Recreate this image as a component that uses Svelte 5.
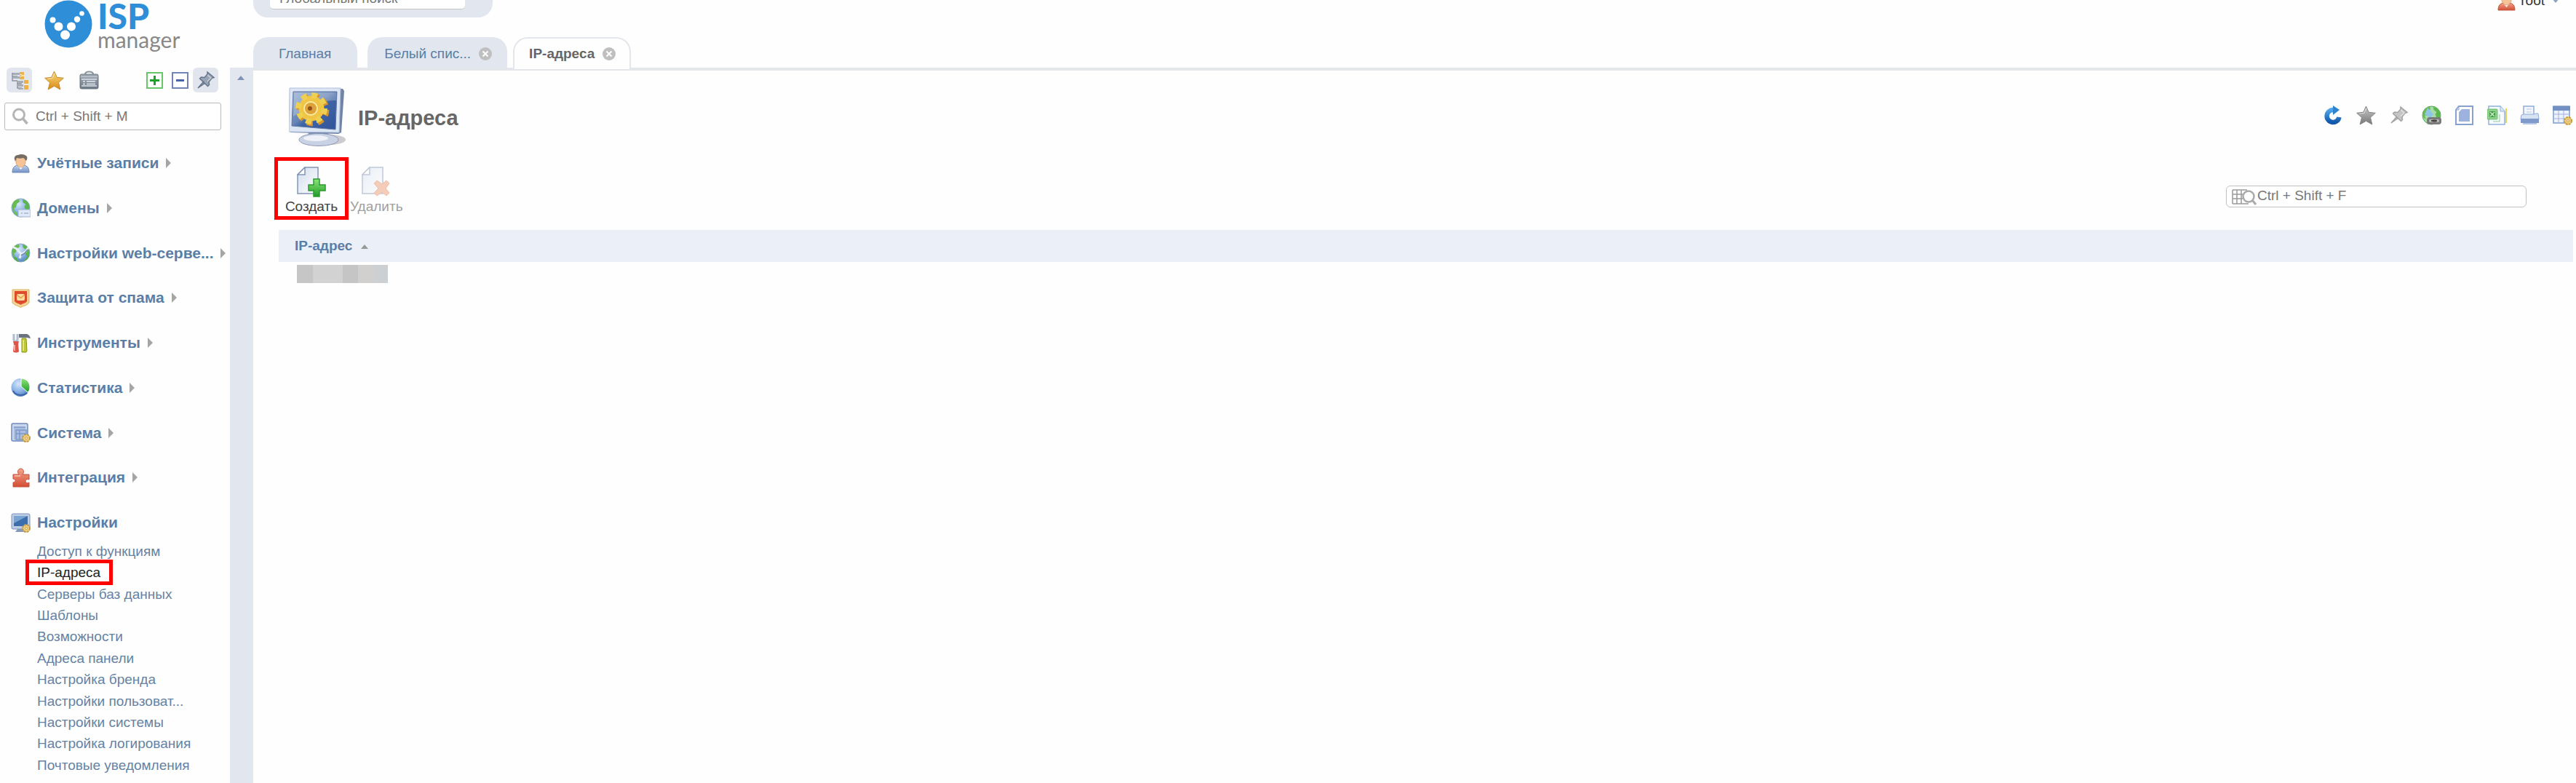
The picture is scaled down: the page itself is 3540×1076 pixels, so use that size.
<script>
    const menu = [
        { icon: 'user', title: 'Учётные записи' },
        { icon: 'domain', title: 'Домены' },
        { icon: 'web', title: 'Настройки web-серве...' },
        { icon: 'shield', title: 'Защита от спама' },
        { icon: 'tools', title: 'Инструменты' },
        { icon: 'stat', title: 'Статистика' },
        { icon: 'system', title: 'Система' },
        { icon: 'puzzle', title: 'Интеграция' },
        { icon: 'settings', title: 'Настройки', open: true }
    ];

    const submenu = [
        'Доступ к функциям',
        'IP-адреса',
        'Серверы баз данных',
        'Шаблоны',
        'Возможности',
        'Адреса панели',
        'Настройка бренда',
        'Настройки пользоват...',
        'Настройки системы',
        'Настройка логирования',
        'Почтовые уведомления'
    ];

    const actions = [
        { icon: 'refresh', title: 'Обновить' },
        { icon: 'starGray', title: 'В избранное' },
        { icon: 'pinGray', title: 'Закрепить' },
        { icon: 'link', title: 'Ссылка' },
        { icon: 'copy', title: 'Копировать' },
        { icon: 'excel', title: 'Экспорт' },
        { icon: 'print', title: 'Печать' },
        { icon: 'columns', title: 'Настройка колонок' }
    ];

    let activeItem = $state('IP-адреса');
</script>

<svg class="defs" aria-hidden="true">
    <defs>
        <linearGradient id="gold" x1="0" y1="0" x2="0" y2="1"><stop offset="0" stop-color="#f9dc7c" /><stop offset="1" stop-color="#d98a17" /></linearGradient>
        <linearGradient id="silver" x1="0" y1="0" x2="0" y2="1"><stop offset="0" stop-color="#c9c9c9" /><stop offset="1" stop-color="#777" /></linearGradient>
        <linearGradient id="blue" x1="0" y1="0" x2="0" y2="1"><stop offset="0" stop-color="#c3d5ee" /><stop offset="1" stop-color="#7391c4" /></linearGradient>
        <linearGradient id="steel" x1="0" y1="0" x2="0" y2="1"><stop offset="0" stop-color="#a3adb9" /><stop offset="1" stop-color="#6c7785" /></linearGradient>
        <linearGradient id="red" x1="0" y1="0" x2="0" y2="1"><stop offset="0" stop-color="#f2a58c" /><stop offset="1" stop-color="#d34e35" /></linearGradient>
        <linearGradient id="green" x1="0" y1="0" x2="0" y2="1"><stop offset="0" stop-color="#8ee57b" /><stop offset="1" stop-color="#1f9d26" /></linearGradient>
        <linearGradient id="refreshBlue" x1="0" y1="0" x2="0" y2="1"><stop offset="0" stop-color="#4ea6ea" /><stop offset="1" stop-color="#1059ab" /></linearGradient>
        <linearGradient id="screen" x1="0" y1="0" x2="1" y2="1"><stop offset="0" stop-color="#8fa9cf" /><stop offset=".45" stop-color="#6684b5" /><stop offset=".55" stop-color="#3f64a3" /><stop offset="1" stop-color="#31549a" /></linearGradient>
        <linearGradient id="paper" x1="0" y1="0" x2="1" y2="1"><stop offset="0" stop-color="#d4deed" /><stop offset="1" stop-color="#fdfdff" /></linearGradient>
        <radialGradient id="ocean" cx=".4" cy=".3" r=".8"><stop offset="0" stop-color="#d5e6fa" /><stop offset=".5" stop-color="#8db5e6" /><stop offset="1" stop-color="#4777b8" /></radialGradient>
    </defs>
</svg>

{#snippet gear()}
    <circle cx="21" cy="21" r="5" fill="#edcf7f" stroke="#c79a3c" stroke-width="2" stroke-dasharray="3 1" />
    <circle cx="21" cy="21" r="1.5" fill="#fff6d8" stroke="#b98a30" stroke-width=".7" />
{/snippet}

{#snippet icon(name)}
    <svg class="icon" viewBox="0 0 27 27" aria-hidden="true">
        {#if name === 'tree'}
            <path d="M4 3v11h7M4 4h7M4 8h7M11 14v10h6M11 18h6" fill="none" stroke="#8b939f" stroke-width="1.5" />
            <path d="M5 3h9v3H5zM5 8h9v3H5zM11 14h8v3h-8zM11 19h8v3h-8zM12 24h7v2h-7z" fill="#a7adb6" />
            <path d="M14 2h6v10h-6zM20 13h6v5h-6zM20 20h6v6h-6z" fill="#edb14a" />
            <path d="M14 5l6 2-6 1M20 19h6" stroke="#fff0c6" fill="none" />
        {:else if name === 'star' || name === 'starGray'}
            <path d="M13.5 1l3.7 8.3 9.1 1-6.800 6.200 2.300 9.500-8.300-4.700-8.300 4.700 2.300-9.500L.7 10.300l9.100-1z" fill={name === 'star' ? 'url(#gold)' : 'url(#silver)'} stroke={name === 'star' ? '#c58728' : '#858585'} />
            <path d="M13.500 4l-2.700 6.500-6.500.8" fill="none" stroke="#fff" stroke-opacity=".6" />
        {:else if name === 'case'}
            <path d="M8 5c0-2 2-3.500 5.500-3.500S19 3 19 5" fill="none" stroke="#8b949e" stroke-width="2" />
            <rect x="1" y="5" width="25" height="20" rx="2" fill="url(#steel)" stroke="#6b7683" />
            <path d="M3 12h21M3 21h21" stroke="#dce1e7" stroke-width="1.500" />
            <path d="M5 15h3M10 15h12M5 18.500h3M10 18.500h12" stroke="#e6e9ed" stroke-width="1.500" />
            <path d="M2 8.500h23" stroke="#cad0d7" />
        {:else if name === 'plus' || name === 'minus'}
            <rect x="3" y="3" width="21" height="21" fill="#fff" stroke={name === 'plus' ? '#69c668' : '#7184b5'} stroke-width="2" />
            <path d={name === 'plus' ? 'M7 13.500h13M13.500 7v13' : 'M8 13.500h11'} stroke={name === 'plus' ? '#1fa22a' : '#4964a2'} stroke-width="3" />
        {:else if name === 'pin' || name === 'pinGray'}
            <g stroke={name === 'pin' ? '#65758c' : '#a3a3a3'} fill={name === 'pin' ? '#98a4b5' : '#c4c4c4'} stroke-width="1.500">
                <path d="M16 2l9 7.500-3 1-4 5 .5 4-2 2L5.500 11l2-2 4.500.500 4-4.500z" />
                <path d="M10.500 15.500L3 24l8.500-6z" />
                <path d="M16 6l5 4-5 5" fill="none" stroke="#fff" stroke-opacity=".5" />
            </g>
        {:else if name === 'user' || name === 'userRed'}
            <path d="M2 26c0-7 3-9 7-10h9c4 1 7 3 7 10z" fill={name === 'user' ? 'url(#blue)' : 'url(#red)'} stroke={name === 'user' ? '#6b89b8' : '#c35a38'} />
            <path d="M9 16l4.500 6 4.500-6z" fill="#fff" />
            <path d="M7 7c0-4 13-4 13 0v5c0 4-4 7-6.500 7S7 16 7 12z" fill="#f5c395" stroke="#bf875d" stroke-width=".6" />
            <path d="M5 8c-1-4 2-6 5-6 4-2 9-1 12 2 1 3 0 4-1 6-2-2-2-3-4-4-3 1-6 1-9 0l-2 5z" fill="#756c64" />
        {:else if name === 'domain' || name === 'web' || name === 'link'}
            <circle cx="13.500" cy="13.500" r="12.500" fill={name === 'link' ? '#a7dbab' : 'url(#ocean)'} stroke={name === 'link' ? '#49a54b' : '#89a9c2'} />
            <path d="M2 9c1-4 4-7 9-7l1 3-4 3-1 5-3 1 2 5-3-2C1 14 1 11 2 9z" fill="#69bb4f" />
            <path d="M16 2c5 1 9 5 9.500 10l-1 6-4-1-2-5 2-3-4-3z" fill="#5bb74c" />
            {#if name === 'domain'}
                <path d="M3 18l5 2 2 5c-4-1-6-4-7-7z" fill="#6cc04f" />
                <rect x="10" y="16" width="17" height="10" rx="1" fill="#dfe8f6" stroke="#9fb3d1" />
                <path d="M14 21h2M18 21h6" stroke="#a4b6d3" stroke-width="1.500" />
            {:else if name === 'web'}
                <path d="M3 18l5 2 3 6c-4-1-7-4-8-8zM17 25l8-9c0 5-4 8-8 9z" fill="#56b04a" />
                <path d="M2 5l6 3 4 5 3 2 5-3 4-6M14 15l-2 6" fill="none" stroke="#e7eef8" stroke-width="3" />
                <path d="M14 17l5-3 4-5" fill="none" stroke="#7187a8" stroke-width="1.500" />
            {:else}
                <path d="M8 3l8 9-4 5-8-5z" fill="#8fc4e6" />
                <rect x="7" y="16" width="20" height="10" rx="4" fill="#7a7a7a" />
                <path d="M12 21h2M21 21h1" stroke="#bbb" stroke-width="4" stroke-linecap="round" />
                <path d="M13 21h8" stroke="#444" stroke-width="2" />
            {/if}
        {:else if name === 'shield'}
            <path d="M2 2h23v18c-3 4-8 4-11.500 6.500C10 24 5 24 2 20z" fill="#f4d594" stroke="#dfae60" />
            <path d="M5 4h17v14c-2 3-6 3-8.500 5C11 21 7 21 5 18z" fill="#dd4b2b" />
            <rect x="8" y="8" width="11" height="9" rx="2" fill="#f8dda0" />
            <path d="M8 9l5.500 4.500L19 9" fill="none" stroke="#e0a23e" stroke-width="1.500" />
        {:else if name === 'tools'}
            <path d="M4 1v8l2 3M9 1v8l-2 3" fill="none" stroke="#b0bccb" stroke-width="3" />
            <path d="M3 11h8l-1 4 1 10c-2 2-6 2-8 0l1-10z" fill="#df5549" />
            <path d="M5 16v8" stroke="#f6aaa2" stroke-width="2" />
            <path d="M11 1h11c3 1 4 3 5 6l-5-1H11z" fill="#6b737e" />
            <path d="M15 7h6l1 17-1 2h-6z" fill="#bfc92d" stroke="#8b9420" />
            <path d="M17 9v15" stroke="#ecf08b" stroke-width="1.500" />
        {:else if name === 'stat'}
            <circle cx="13" cy="13.500" r="12.500" fill="url(#ocean)" />
            <path d="M14 1c7 0 12 5 12 12 0 3-1 6-3 7l-9-8z" fill="url(#green)" stroke="#fff" />
            <path d="M3 18c2 5 12 9 19 3" fill="none" stroke="#3c64ad" stroke-width="2" />
        {:else if name === 'system'}
            <rect x="1" y="1" width="22" height="24" rx="2" fill="#c9d6ec" stroke="#6f8bbb" stroke-width="1.500" />
            <path d="M4 6h16v17H4z" fill="#a9bde0" />
            <path d="M4 6h16M7 10h14v13H7zM7 15h14M12 10v13" fill="none" stroke="#7f99c6" stroke-width="1.500" />
            {@render gear()}
        {:else if name === 'puzzle'}
            <path d="M3 9h8c-3-4-1-8 2.500-8S19 5 16 9h9v7c-5-2-7 4-2 5l2-1v6H3v-6c4 0 4-5 0-5z" fill="url(#red)" stroke="#c6513b" />
            <path d="M5 11h8" stroke="#f9c2b3" stroke-width="1.500" />
        {:else if name === 'settings'}
            <rect x="1" y="1" width="25" height="21" rx="2" fill="#bdcde3" stroke="#7c94b8" />
            <rect x="4" y="4" width="19" height="14" fill="#3c6ead" />
            <path d="M4 4h19L4 14z" fill="#79a3d2" />
            <path d="M9 22h9l2 4H6z" fill="#8099bd" />
            {@render gear()}
        {:else if name === 'refresh'}
            <path d="M21.500 16a8.500 8.500 0 1 1-8-10" fill="none" stroke="url(#refreshBlue)" stroke-width="6.500" />
            <path d="M13 0l9 6-9 7z" fill="#2e83d1" />
        {:else if name === 'copy'}
            <path d="M6 1h19v25H2V6z" fill="#fff" stroke="#88a1d0" stroke-width="2" />
            <path d="M10 5h11v17H6V9z" fill="#9eb2df" />
            <path d="M6 1v5H2" fill="none" stroke="#88a1d0" />
        {:else if name === 'excel'}
            <path d="M4 1h14l6 7v18H2V1z" fill="#f6fbff" stroke="#8eb1dc" stroke-width="1.500" />
            <path d="M18 1v7h6" fill="#dbe8f5" stroke="#8eb1dc" />
            <path d="M26 4v20" stroke="#e5d45a" stroke-width="2" />
            <rect x="0" y="5" width="14" height="14" rx="1" fill="#8fd08d" stroke="#6fbf70" />
            <path d="M3 8h8v8H3z" fill="#3d9a45" />
            <path d="M4 9l6 6M10 9l-6 6" stroke="#c8efc6" stroke-width="1.500" />
            <path d="M17 12v10h-9" fill="none" stroke="#94c796" />
        {:else if name === 'print'}
            <path d="M5 14V1h14v13z" fill="#f4f8fe" stroke="#8fabdb" stroke-width="1.500" />
            <path d="M9 5h7M9 9h7" stroke="#b8c9e6" />
            <path d="M5 12h14l3-1h3l1 8H1l1-6z" fill="#d7e2f4" stroke="#93abd7" />
            <path d="M1 18h25v6H1z" fill="#7f9acb" />
            <path d="M4 24h19v2H4z" fill="#b3c5e5" />
        {:else if name === 'columns'}
            <rect x="1" y="1" width="22" height="23" fill="#edf3fd" stroke="#7f9acb" stroke-width="1.500" />
            <path d="M0 1h24v6H0z" fill="#748fc2" />
            <path d="M1 12h22M1 18h22M8 7v17M15 7v17" stroke="#9db1dc" />
            {@render gear()}
        {/if}
    </svg>
{/snippet}

{#snippet closeMark()}
    <svg class="close" viewBox="0 0 20 20" aria-hidden="true">
        <circle cx="10" cy="10" r="9" fill="#bfbfbf" />
        <path d="M6.500 6.500l7 7M13.500 6.500l-7 7" stroke="#fff" stroke-width="2" />
    </svg>
{/snippet}

{#snippet page(mark)}
    <svg class="page-icon" viewBox="0 0 40 42" aria-hidden="true">
        <path d="M11 1h18v36H1V11z" fill="url(#paper)" stroke="#8297b8" stroke-width="1.500" />
        <path d="M11 1v10H1z" fill="#fff" stroke="#8297b8" stroke-width="1.500" />
        {#if mark === 'add'}
            <path d="M23 17h8v8h8v8h-8v8h-8v-8h-7v-8h7z" fill="url(#green)" stroke="#2a9b2e" stroke-width="1.500" />
        {:else}
            <path d="M17 23l4-4 7 5 6-5 4 4-5 7 5 6-4 4-6-5-7 5-4-4 6-6z" fill="#ee9b73" stroke="#df8159" />
        {/if}
    </svg>
{/snippet}

<div class="app">
    <aside>
        <a class="logo" href="#main">
            <svg class="logo-mark" viewBox="0 0 66 66" aria-hidden="true">
                <circle cx="33" cy="33" r="32.500" fill="#2f8ed8" />
                <g fill="#fff">
                    <circle cx="11.500" cy="27.500" r="4" />
                    <circle cx="19.500" cy="36.500" r="6" />
                    <circle cx="28.500" cy="48" r="6.500" />
                    <circle cx="37" cy="36.500" r="6" />
                    <circle cx="45" cy="26.500" r="4.200" />
                    <circle cx="51.500" cy="18.500" r="3.300" />
                </g>
            </svg>
            <span class="logo-text">
                <span class="isp">ISP</span>
                <span class="manager">manager</span>
            </span>
        </a>

        <div class="side-body">
            <nav>
                <div class="tools">
                    <button class="tool on" aria-label="Дерево">{@render icon('tree')}</button>
                    <button class="tool" aria-label="Избранное">{@render icon('star')}</button>
                    <button class="tool" aria-label="Задачи">{@render icon('case')}</button>
                    <button class="tool first-right" aria-label="Развернуть">{@render icon('plus')}</button>
                    <button class="tool" aria-label="Свернуть">{@render icon('minus')}</button>
                    <button class="tool on" aria-label="Закрепить меню">{@render icon('pin')}</button>
                </div>

                <label class="menu-search">
                    <svg viewBox="0 0 22 24" aria-hidden="true">
                        <circle cx="9" cy="9.500" r="7.500" fill="none" stroke="#b5b5b5" stroke-width="3" />
                        <path d="M14.500 15l6 7" stroke="#b5b5b5" stroke-width="3.500" />
                    </svg>
                    <input type="text" placeholder="Ctrl + Shift + M" aria-label="Поиск по меню">
                </label>

                <ul class="menu">
                    {#each menu as item}
                        <li>
                            <a href="#menu">
                                {@render icon(item.icon)}
                                <span>{item.title}</span>
                                {#if !item.open}
                                    <i class="arrow"></i>
                                {/if}
                            </a>
                        </li>
                    {/each}
                </ul>
                <ul class="submenu">
                    {#each submenu as item}
                        <li>
                            <a href="#item" class:current={item === activeItem} onclick={() => (activeItem = item)}>{item}</a>
                        </li>
                    {/each}
                </ul>
            </nav>
            <div class="strip"><i class="up"></i></div>
        </div>
    </aside>

    <main id="main">
        <header>
            <div class="global-search">
                <input type="text" placeholder="Глобальный поиск" aria-label="Глобальный поиск">
            </div>
            <button class="account">
                {@render icon('userRed')}
                <span>root</span>
                <i class="down"></i>
            </button>
        </header>

        <div class="tabs">
            <a class="tab home" href="#home">Главная</a>
            <a class="tab" href="#white">Белый спис... {@render closeMark()}</a>
            <a class="tab active" href="#ip">IP-адреса {@render closeMark()}</a>
        </div>

        <section>
            <div class="title-row">
                <svg class="monitor" viewBox="0 0 78 82" aria-hidden="true">
                    <ellipse cx="55" cy="72" rx="23" ry="7" fill="#aaa" opacity=".6" />
                    <path d="M29 60h23l4 8H24z" fill="#8295b9" />
                    <ellipse cx="41" cy="72" rx="27" ry="8.500" fill="#c9d2e4" stroke="#8d9bb9" />
                    <ellipse cx="37" cy="70" rx="17" ry="4" fill="#eef2f8" />
                    <path d="M5 1l69 1 2 3-4 57-4 2-66-2z" fill="#7183a7" />
                    <path d="M1 1h70l-2 61L0 61z" fill="#dce5f4" stroke="#b1c0dc" />
                    <path d="M6 6h60l-2 52L4 53z" fill="url(#screen)" stroke="#6279a2" />
                    <path d="M7 7h58v11C43 17 23 28 6 40z" fill="#fff" opacity=".25" />
                    <circle cx="33" cy="31" r="18" fill="none" stroke="#d8932b" stroke-width="9" stroke-dasharray="7.500 6.600" />
                    <circle cx="31" cy="29" r="12" fill="none" stroke="#f0c445" stroke-width="11" />
                    <circle cx="31" cy="29" r="18" fill="none" stroke="#eed051" stroke-width="8" stroke-dasharray="7.500 6.600" />
                    <circle cx="30" cy="29" r="9" fill="#dda239" stroke="#fbe9a0" stroke-width="2" />
                    <circle cx="29" cy="29" r="3" fill="#92501b" />
                </svg>
                <h1>IP-адреса</h1>
                <div class="actions">
                    {#each actions as action}
                        <button aria-label={action.title}>{@render icon(action.icon)}</button>
                    {/each}
                </div>
            </div>

            <div class="toolbar">
                <button class="command marked">{@render page('add')}<span>Создать</span></button>
                <button class="command" disabled>{@render page('remove')}<span>Удалить</span></button>
                <label class="table-search">
                    <svg viewBox="0 0 34 22" aria-hidden="true">
                        <path d="M1 1h20M1 7h14M1 13h14M1 20h22M1 1v19M7 1v19M13 1v19" fill="none" stroke="#999" stroke-width="1.500" />
                        <circle cx="23" cy="10" r="7.500" fill="#fff" stroke="#aaa" stroke-width="2.500" />
                        <path d="M28 15l5 6" stroke="#aaa" stroke-width="3" />
                    </svg>
                    <input type="text" placeholder="Ctrl + Shift + F" aria-label="Поиск по таблице">
                </label>
            </div>

            <table>
                <thead>
                    <tr><th>IP-адрес <i class="up sort"></i></th></tr>
                </thead>
                <tbody>
                    <tr><td><div class="hidden-ip"></div></td></tr>
                </tbody>
            </table>
        </section>
    </main>
</div>

<style>
    :global(body) {
        background: #fefefe;
        font-family: "Liberation Sans", Arial, sans-serif;
        font-size: 19px;
        line-height: 28px;
    }
    .app {
        display: grid;
        grid-template-columns: 348px 1fr;
        min-height: 100vh;
    }
    .defs {
        position: absolute;
        width: 0;
        height: 0;
    }
    button, input {
        font: inherit;
        color: inherit;
        border: 0;
        padding: 0;
        margin: 0;
        background: none;
    }
    button {
        cursor: pointer;
    }
    input {
        outline: 0;
        min-width: 0;
    }
    input::placeholder {
        color: #777;
        opacity: 1;
    }
    a {
        text-decoration: none;
        color: #5a7ea6;
    }
    ul {
        list-style: none;
        margin: 0;
        padding: 0;
    }
    .icon {
        display: block;
        flex: none;
        width: 27px;
        height: 27px;
    }

    /* sidebar */
    aside {
        display: flex;
        flex-direction: column;
    }
    .logo {
        display: flex;
        gap: 7px;
        height: 93px;
        padding-left: 61px;
        box-sizing: border-box;
    }
    .logo-mark {
        width: 66px;
        height: 66px;
    }
    .logo-text {
        display: flex;
        flex-direction: column;
        font-family: Lato, sans-serif;
    }
    .isp {
        font-size: 48px;
        font-weight: 900;
        line-height: 44px;
        color: #2f8ed8;
    }
    .manager {
        font-size: 30px;
        line-height: 20px;
        color: #888;
    }
    .side-body {
        display: flex;
        flex: 1;
    }
    nav {
        width: 316px;
        padding-bottom: 9px;
        box-sizing: border-box;
    }
    .strip {
        width: 32px;
        background: #e1e6ef;
    }
    .strip .up {
        margin: 11px auto 0 10px;
    }
    .tools {
        display: flex;
        height: 34px;
        padding: 0 16px 0 9px;
    }
    .tool {
        display: flex;
        align-items: center;
        justify-content: center;
        width: 35px;
        height: 34px;
        margin-right: 13px;
        border-radius: 6px;
    }
    .first-right {
        margin-left: auto;
    }
    .first-right, .first-right ~ .tool {
        margin-right: 0;
    }
    .on {
        background: #e1e5ee;
    }
    .menu-search {
        display: flex;
        align-items: center;
        gap: 10px;
        height: 38px;
        margin: 14px 12px 0 6px;
        padding-left: 10px;
        border: 1px solid #b9b9b9;
        border-radius: 3px;
        box-sizing: border-box;
        background: #fff;
    }
    .menu-search svg {
        width: 22px;
        height: 24px;
    }
    .menu {
        display: grid;
        align-content: space-between;
        height: 522px;
        margin-top: 31px;
    }
    .menu a {
        display: flex;
        align-items: center;
        height: 28px;
        padding-left: 15px;
        font-weight: bold;
        font-size: 21px;
        white-space: nowrap;
    }
    .menu span {
        margin: 0 10px 0 9px;
    }
    .arrow {
        border: 7px solid transparent;
        border-left-color: #a5a5a5;
        border-right-width: 0;
    }
    .submenu {
        display: grid;
        grid-auto-rows: 1fr;
        height: 323px;
        margin-top: 12px;
        padding-left: 51px;
    }
    .submenu a {
        position: relative;
        color: #6583a4;
        white-space: nowrap;
    }
    .submenu .current {
        color: #222;
    }
    .current::after {
        content: "";
        position: absolute;
        inset: -7px -17px -7px -16px;
        border: 5px solid #f00;
    }
    .up {
        display: block;
        width: 0;
        border: 5px solid transparent;
        border-bottom: 6px solid #7d93b8;
        border-top-width: 0;
    }

    /* top line */
    main {
        display: flex;
        flex-direction: column;
        min-width: 0;
    }
    header {
        display: flex;
        align-items: flex-end;
        justify-content: space-between;
        height: 24px;
        padding-right: 23px;
        overflow: hidden;
    }
    .global-search {
        padding: 0 38px 11px 23px;
        border-radius: 0 0 20px 20px;
        background: #e1e6ef;
    }
    .global-search input {
        display: block;
        width: 268px;
        height: 30px;
        padding: 0 13px;
        border-radius: 5px;
        border-bottom: 1px solid #c4c4c4;
        box-sizing: border-box;
        background: #fff;
    }
    .account {
        display: flex;
        align-items: center;
        gap: 6px;
        margin-bottom: 9px;
        color: #333;
    }
    .account .down {
        margin-left: 4px;
        border: 5px solid transparent;
        border-top: 6px solid #8ba0c2;
        border-bottom-width: 0;
    }

    /* tabs */
    .tabs {
        display: flex;
        gap: 8px;
        height: 42px;
        margin-top: 27px;
        border-bottom: 4px solid #e3e6eb;
    }
    .tab {
        display: flex;
        align-items: center;
        gap: 10px;
        padding: 4px 20px 0 23px;
        border-radius: 20px 20px 0 0;
        background: #e1e6ef;
    }
    .tab.home {
        margin-right: 6px;
        padding: 4px 36px 0 35px;
    }
    .tab.active {
        margin-bottom: -2px;
        padding: 2px 18px 2px 20px;
        border: 2px solid #e3e6eb;
        border-bottom: 0;
        background: #fefefe;
        font-weight: bold;
        color: #666;
    }
    .close {
        width: 20px;
        height: 20px;
    }

    /* content */
    section {
        padding: 23px 4px 0 35px;
    }
    .title-row {
        display: flex;
        gap: 17px;
        height: 82px;
        padding-left: 14px;
    }
    .monitor {
        width: 78px;
        height: 82px;
    }
    h1 {
        margin: 28px 0 0;
        font-size: 29px;
        line-height: 28px;
        color: #666;
    }
    .actions {
        display: flex;
        gap: 18px;
        height: 27px;
        margin: 25px 1px 0 auto;
    }
    .toolbar {
        display: flex;
        align-items: flex-start;
        height: 114px;
        padding: 14px 64px 0 0;
        box-sizing: border-box;
    }
    .command {
        display: flex;
        flex-direction: column;
        align-items: center;
        justify-content: flex-start;
        height: 86px;
        padding: 13px 0 0;
        box-sizing: border-box;
        color: #444;
        line-height: 26px;
    }
    .command:disabled {
        opacity: .5;
        padding-left: 2px;
    }
    .marked {
        width: 102px;
        margin-left: -6px;
        padding-top: 8px;
        border: 5px solid #f00;
    }
    .page-icon {
        width: 40px;
        height: 42px;
    }
    .table-search {
        display: flex;
        gap: 1px;
        width: 413px;
        height: 30px;
        margin: 39px 0 0 auto;
        padding-left: 7px;
        border: 1px solid #c2c2c2;
        border-radius: 6px;
        box-sizing: border-box;
        background: #fff;
    }
    .table-search svg {
        width: 34px;
        height: 22px;
        margin-top: 4px;
    }
    .table-search input {
        flex: 1;
        height: 26px;
    }
    table {
        width: 100%;
        border-collapse: collapse;
    }
    th {
        height: 44px;
        padding: 0 0 0 22px;
        background: #ebf0f8;
        text-align: left;
        color: #5a7ea6;
    }
    .sort {
        display: inline-block;
        margin-left: 6px;
        vertical-align: 2px;
        border-bottom-color: #999;
    }
    td {
        padding: 4px 0 0 25px;
    }
    .hidden-ip {
        width: 125px;
        height: 25px;
        background: linear-gradient(90deg, #c6c6c6 22px, #d2d2d3 22px 63px, #c5c5c5 63px 84px, #d2d0cf 84px 106px, #cdd0d2 106px);
    }
</style>
